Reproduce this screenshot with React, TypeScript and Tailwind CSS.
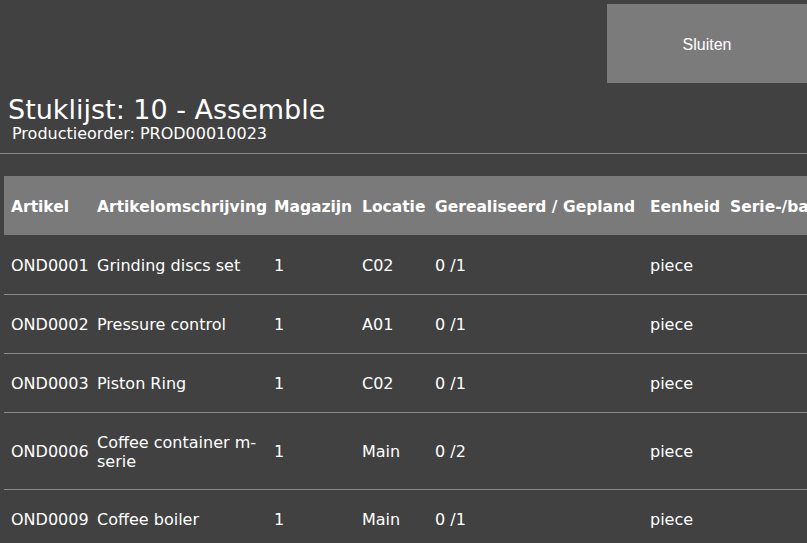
import React from 'react';

type Line = {
  artikel: string;
  omschrijving: string;
  magazijn: string;
  locatie: string;
  aantal: string;
  eenheid: string;
  tall?: boolean;
};

const lines: Line[] = [
  { artikel: 'OND0001', omschrijving: 'Grinding discs set', magazijn: '1', locatie: 'C02', aantal: '0 /1', eenheid: 'piece' },
  { artikel: 'OND0002', omschrijving: 'Pressure control', magazijn: '1', locatie: 'A01', aantal: '0 /1', eenheid: 'piece' },
  { artikel: 'OND0003', omschrijving: 'Piston Ring', magazijn: '1', locatie: 'C02', aantal: '0 /1', eenheid: 'piece' },
  { artikel: 'OND0006', omschrijving: 'Coffee container m-serie', magazijn: '1', locatie: 'Main', aantal: '0 /2', eenheid: 'piece', tall: true },
  { artikel: 'OND0009', omschrijving: 'Coffee boiler', magazijn: '1', locatie: 'Main', aantal: '0 /1', eenheid: 'piece' },
];

const columns = [
  { label: 'Artikel', width: 'w-[86px]' },
  { label: 'Artikelomschrijving', width: 'w-[177px]' },
  { label: 'Magazijn', width: 'w-[88px]' },
  { label: 'Locatie', width: 'w-[73px]' },
  { label: 'Gerealiseerd / Gepland', width: 'w-[215px]' },
  { label: 'Eenheid', width: 'w-[80px]' },
  { label: 'Serie-/batchnummer', width: 'w-[200px]' },
];

export default function App() {
  return (
    <div className="w-[807px] h-[543px] overflow-hidden bg-[#414141] text-white font-['DejaVu_Sans',sans-serif]">
      {/* Top bar with close action */}
      <div className="flex justify-end pt-[4px]">
        <button className="h-[79px] w-[200px] pt-[2px] bg-[#7b7b7b] font-['Liberation_Sans',Arial,sans-serif] text-[16px] text-white">
          Sluiten
        </button>
      </div>

      {/* Heading */}
      <h1 className="mt-[12px] px-[8px] text-[27px] leading-[30px] whitespace-nowrap">Stuklijst: 10 - Assemble</h1>
      <p className="pl-[12px] text-[16px] leading-[18px] whitespace-nowrap">Productieorder: PROD00010023</p>
      <div className="mt-[10px] h-px bg-[#8a8a8a]" />

      {/* Bill of materials */}
      <table className="mt-[22px] ml-[4px] table-fixed border-collapse w-[919px]">
        <thead>
          <tr className="h-[59px] bg-[#7a7a7a]">
            {columns.map((c) => (
              <th
                key={c.label}
                className={`${c.width} px-[7px] pt-[4px] text-left text-[15.5px] font-bold whitespace-nowrap overflow-hidden`}
              >
                {c.label}
              </th>
            ))}
          </tr>
        </thead>
        <tbody>
          {lines.map((l, i) => (
            <tr
              key={l.artikel}
              className={`${l.tall ? 'h-[77px]' : 'h-[59px]'} ${i > 0 ? 'border-t border-[#8a8a8a]' : ''} text-[16px] leading-[19px]`}
            >
              <td className="px-[7px] pt-[2px] align-middle">{l.artikel}</td>
              <td className="px-[7px] pt-[2px] align-middle">{l.omschrijving}</td>
              <td className="px-[7px] pt-[2px] align-middle">{l.magazijn}</td>
              <td className="px-[7px] pt-[2px] align-middle">{l.locatie}</td>
              <td className="px-[7px] pt-[2px] align-middle">{l.aantal}</td>
              <td className="px-[7px] pt-[2px] align-middle">{l.eenheid}</td>
              <td className="px-[7px] pt-[2px] align-middle"></td>
            </tr>
          ))}
        </tbody>
      </table>
    </div>
  );
}
